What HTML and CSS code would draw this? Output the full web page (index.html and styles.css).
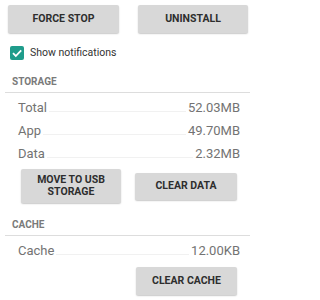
FILE: index.html
```html
<!DOCTYPE html>
<html>
<head>
<meta charset="utf-8">
<link rel="stylesheet" href="styles.css">
</head>
<body>
<div class="actions">
  <button class="btn btn-force">FORCE STOP</button>
  <button class="btn btn-uninstall">UNINSTALL</button>
</div>
<div class="check-row">
  <span class="checkbox">
    <svg width="14" height="14" viewBox="0 0 14 14"><rect x="0" y="0" width="14" height="14" rx="2" fill="#1f9c8b"/><path d="M3 7.2 L5.8 10 L11.2 4.4" fill="none" stroke="#fff" stroke-width="1.8"/></svg>
  </span>
  <span class="check-label">Show notifications</span>
</div>

<div class="section-head">STORAGE</div>
<div class="rows">
  <div class="row"><span class="label">Total</span><span class="leader"></span><span class="value">52.03MB</span></div>
  <div class="row"><span class="label">App</span><span class="leader"></span><span class="value">49.70MB</span></div>
  <div class="row"><span class="label">Data</span><span class="leader"></span><span class="value">2.32MB</span></div>
</div>
<div class="storage-actions">
  <button class="btn btn-move">MOVE TO USB<br>STORAGE</button>
  <button class="btn btn-clear-data">CLEAR DATA</button>
</div>

<div class="section-head section-cache">CACHE</div>
<div class="rows">
  <div class="row"><span class="label">Cache</span><span class="leader"></span><span class="value">12.00KB</span></div>
</div>
<div class="cache-actions">
  <button class="btn btn-clear-cache">CLEAR CACHE</button>
</div>
</body>
</html>
```

FILE: styles.css
```css
html, body {
  margin: 0;
  padding: 0;
  background: #ffffff;
}
body {
  width: 250px;
  height: 300px;
  overflow: hidden;
  font-family: Roboto, "Liberation Sans", sans-serif;
}
.btn {
  display: flex;
  align-items: center;
  justify-content: center;
  border: none;
  margin: 0;
  padding: 0;
  background: #d8d8d8;
  border-radius: 2px;
  box-shadow: 0 1px 1.5px rgba(0, 0, 0, 0.22);
  font-family: Roboto, "Liberation Sans", sans-serif;
  font-weight: 700;
  font-size: 10.5px;
  line-height: 12px;
  color: #2e2e2e;
  text-align: center;
}
.actions {
  display: flex;
  gap: 19px;
  padding: 5px 0 0 8px;
}
.btn-force {
  width: 111px;
  height: 28px;
}
.btn-uninstall {
  width: 110px;
  height: 28px;
}
.check-row {
  display: flex;
  align-items: center;
  gap: 6px;
  margin-top: 13px;
  height: 14px;
  padding-left: 10px;
}
.checkbox {
  display: block;
  width: 14px;
  height: 14px;
}
.checkbox svg {
  display: block;
}
.check-label {
  font-size: 10.5px;
  color: #333333;
  line-height: 14px;
}
.section-head {
  margin: 16px 0 0 5px;
  padding: 0 0 4px 7px;
  border-bottom: 1px solid #dddddd;
  font-size: 10px;
  line-height: 12px;
  font-weight: 700;
  color: #7a7a7a;
}
.rows {
  margin-top: 3px;
}
.row {
  display: flex;
  align-items: baseline;
  padding: 0 10px 0 18px;
  font-size: 13px;
  line-height: 23px;
  color: #737373;
}
.leader {
  flex: 1;
  height: 0;
  border-bottom: 1px solid #f1f1f1;
  margin: 0 2px;
}
.storage-actions {
  display: flex;
  align-items: center;
  gap: 14px;
  margin-top: 4px;
  padding-left: 21px;
}
.btn-move {
  width: 100px;
  height: 34px;
}
.btn-clear-data {
  width: 102px;
  height: 27px;
}
.cache-actions {
  display: flex;
  margin-top: 5px;
  padding-left: 136px;
}
.btn-clear-cache {
  width: 101px;
  height: 28px;
}
```
